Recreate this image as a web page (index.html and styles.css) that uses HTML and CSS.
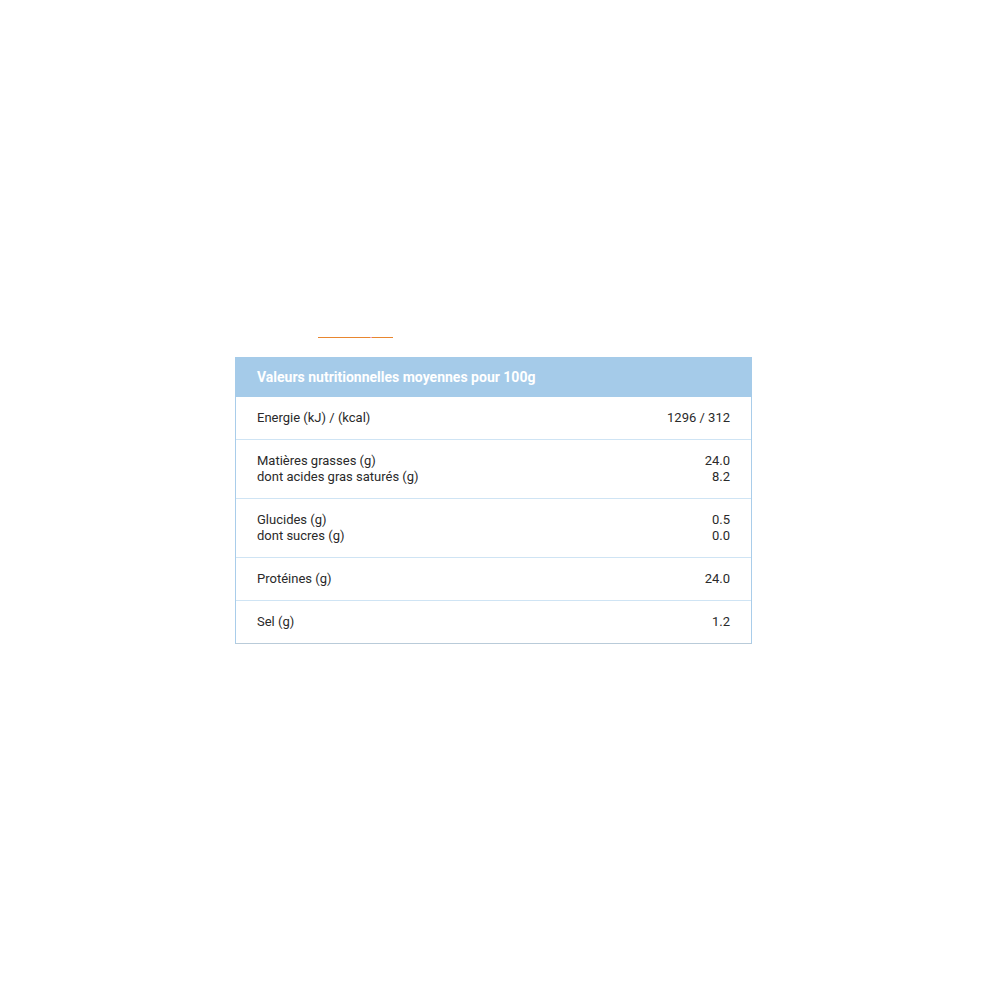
FILE: index.html
```html
<!DOCTYPE html>
<html lang="fr">
<head>
<meta charset="utf-8">
<link rel="stylesheet" href="styles.css">
</head>
<body>
<div class="page">
  <div class="crumb"><span class="seg-a"></span><span class="dot"></span><span class="seg-b"></span></div>
  <div class="table">
    <div class="head">Valeurs nutritionnelles moyennes pour 100g</div>
    <div class="row">
      <div class="label"><div>Energie (kJ) / (kcal)</div></div>
      <div class="value"><div>1296 / 312</div></div>
    </div>
    <div class="row">
      <div class="label"><div>Matières grasses (g)</div><div>dont acides gras saturés (g)</div></div>
      <div class="value"><div>24.0</div><div>8.2</div></div>
    </div>
    <div class="row">
      <div class="label"><div>Glucides (g)</div><div>dont sucres (g)</div></div>
      <div class="value"><div>0.5</div><div>0.0</div></div>
    </div>
    <div class="row">
      <div class="label"><div>Protéines (g)</div></div>
      <div class="value"><div>24.0</div></div>
    </div>
    <div class="row">
      <div class="label"><div>Sel (g)</div></div>
      <div class="value"><div>1.2</div></div>
    </div>
  </div>
</div>
</body>
</html>
```
FILE: styles.css
```css
html, body {
  margin: 0;
  background: #ffffff;
}
.page {
  padding-top: 337px;
  font-family: Roboto, "Liberation Sans", sans-serif;
}
.crumb {
  display: flex;
  margin-left: 318px;
  width: 75px;
  height: 1px;
}
.seg-a {
  width: 52px;
  background: #e8862f;
}
.dot {
  width: 2px;
  background: #f0a0b0;
}
.seg-b {
  flex: 1;
  background: #e8862f;
}
.table {
  margin-top: 19px;
  margin-left: 235px;
  width: 515px;
  border: 1px solid #a9cdea;
  border-top: 0;
  border-bottom-color: #b9cbd9;
}
.head {
  height: 40px;
  background: #a5cbe9;
  color: #ffffff;
  font-weight: 700;
  font-size: 14px;
  line-height: 40px;
  padding: 0 21px 0 22px;
  margin: 0 -1px;
}
.row {
  display: flex;
  justify-content: space-between;
  padding: 13px 21px 13px 21px;
  font-size: 13px;
  line-height: 16px;
  color: #2a2a2a;
}
.row + .row {
  border-top: 1px solid #cfe4f4;
}
.value {
  text-align: right;
}
```
